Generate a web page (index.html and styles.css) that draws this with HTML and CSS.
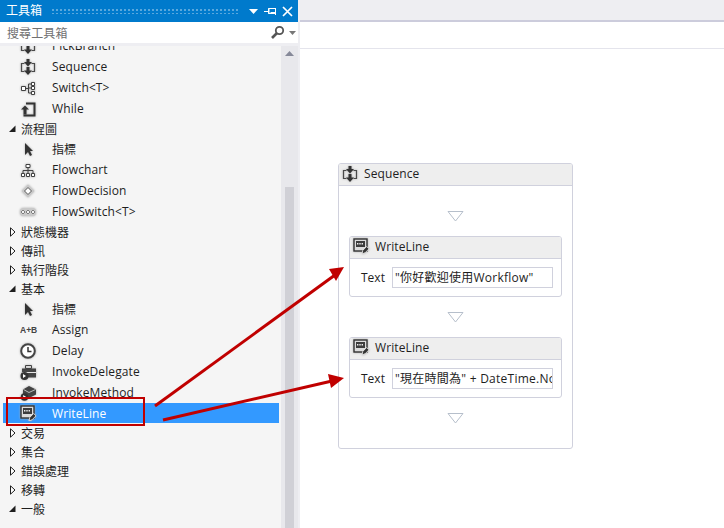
FILE: index.html
```html
<!DOCTYPE html>
<html lang="zh-Hant">
<head>
<meta charset="utf-8">
<title>工具箱</title>
<link rel="stylesheet" href="styles.css">
</head>
<body>
<svg class="defs" width="0" height="0" aria-hidden="true">
  <symbol id="a-closed" viewBox="0 0 7 10"><path d="M1.500 .8v8.400L6 5z" fill="#fff" stroke="#1e1e1e"/></symbol>
  <symbol id="a-open" viewBox="0 0 7 10"><path d="M0 8h6.500V1.500z" fill="#1e1e1e"/></symbol>
  <symbol id="i-seq" viewBox="0 0 16 16">
    <path d="M4.500 4.500h-3v8h3M11.500 4.500h3v8h-3" fill="none" stroke="#4a4a4a" stroke-width="1.200"/>
    <path d="M6.500 0h3v3H12L8 7.500 4 3h2.500zM6.500 8h3v3.500H12L8 16 4 11.500h2.500z" fill="#333"/>
  </symbol>
  <symbol id="i-switch" viewBox="0 0 16 16">
    <path d="M1.500 6.500h4v4h-4zM11.500 2.500h3v3h-3zM11.500 6.500h3v3h-3zM11.500 11.500h3v3h-3z" fill="#fff" stroke="#424242"/>
    <path d="M5.500 8.500h3M8.500 4v9M8.500 4h3M8.500 8h3M8.500 13h3" fill="none" stroke="#424242"/>
  </symbol>
  <symbol id="i-while" viewBox="0 0 16 16">
    <path d="M6 2.500h8.500v12H3.500" fill="none" stroke="#333" stroke-width="2"/>
    <path d="M1 8.500 5 4.500l4 4H6.500v5h-3v-5z" fill="#333"/>
  </symbol>
  <symbol id="i-cursor" viewBox="0 0 16 16">
    <path d="M5 2v12l3-3 2 4 2-1-2-4h3z" fill="#333"/>
  </symbol>
  <symbol id="i-flow" viewBox="0 0 16 16">
    <path d="M6 2.500h4v3H6zM1.500 11.500h3v3h-3zM6.500 11.500h3v3h-3zM11.500 11.500h3v3h-3z" fill="#fff" stroke="#424242"/>
    <path d="M8 5.500v6M3 11V8.500h10V11" fill="none" stroke="#424242"/>
  </symbol>
  <symbol id="i-decision" viewBox="0 0 16 16">
    <path d="M8 1.500 14.500 8 8 14.500 1.500 8z" fill="#c9c9c9"/>
    <path d="M8 4.500 11.500 8 8 11.500 4.500 8z" fill="#fff" stroke="#555"/>
  </symbol>
  <symbol id="i-fswitch" viewBox="0 0 16 16">
    <rect x="0" y="4" width="16" height="8" rx="3.500" fill="#c9c9c9"/>
    <path d="M3 6 5 8 3 10 1 8zM8 6 10 8 8 10 6 8zM13 6 15 8 13 10 11 8z" fill="#f2f2f2" stroke="#666" stroke-width=".8"/>
  </symbol>
  <symbol id="i-clock" viewBox="0 0 16 16">
    <circle cx="8" cy="8" r="6.800" fill="#fff" stroke="#444" stroke-width="2"/>
    <path d="M8 4v4.500h3.500" fill="none" stroke="#333" stroke-width="1.500"/>
  </symbol>
  <symbol id="i-delegate" viewBox="0 0 16 16">
    <path d="M5.500 1.500h6v3h-6z" fill="none" stroke="#444"/>
    <path d="M2 4.500h14v9H2z" fill="#444"/>
    <path d="M2 8.500h14" stroke="#e6e6e6"/>
    <circle cx="4.500" cy="12" r="4" fill="#333"/>
    <path d="M3 10v4l3-2z" fill="#fff"/>
  </symbol>
  <symbol id="i-method" viewBox="0 0 16 16">
    <path d="M9 1 16 4.500v5L9 13 3 9.500v-5z" fill="#444"/>
    <path d="M3.500 4.500 9 7.500l6.500-3" fill="none" stroke="#bbb"/>
    <circle cx="4.500" cy="12" r="3.800" fill="#333"/>
    <path d="M3.200 10v4l3-2z" fill="#fff"/>
  </symbol>
  <symbol id="i-write" viewBox="0 0 16 16">
    <rect x="1" y="1" width="13" height="12" fill="#dcdcdc" stroke="#333" stroke-width="1.400"/>
    <rect x="3" y="3" width="9" height="6" fill="#3c3c3c"/>
    <path d="M4 5h1.400v1.600H4zM6.300 5h1.400v1.600H6.300zM8.600 5h1.400v1.600H8.600z" fill="#f0f0f0"/>
    <path d="M9 16l.8-3.600 3.800-3.900 2.400 2.300-3.800 3.900z" fill="#333" stroke="#f2f2f2" stroke-width=".8"/>
  </symbol>
</svg>

<div class="app">
  <aside class="panel">
    <header class="titlebar">
      <span class="title">工具箱</span>
      <span class="grip"></span>
      <svg class="tb-icon" width="11" height="11" viewBox="0 0 11 11"><path d="M1 3h9L5.500 8z" fill="#fff"/></svg>
      <svg class="tb-icon" width="13" height="11" viewBox="0 0 13 11"><path d="M0 5.500h4M4.500 2.500h7v5h-7zM6.500 6.500h5M11.500 2v7" fill="none" stroke="#fff" stroke-width="1"/><path d="M5 2v6" stroke="#fff"/></svg>
      <svg class="tb-icon" width="11" height="11" viewBox="0 0 11 11"><path d="M1 1l9 9M10 1l-9 9" stroke="#fff" stroke-width="1.700"/></svg>
    </header>
    <div class="search">
      <span class="search-text">搜尋工具箱</span>
      <svg width="15" height="15" viewBox="0 0 15 15"><circle cx="9.500" cy="5.500" r="3.700" fill="none" stroke="#555" stroke-width="1.800"/><path d="M7 8 2 13" stroke="#555" stroke-width="2.600"/></svg>
      <svg class="search-caret" width="7" height="4" viewBox="0 0 7 4"><path d="M0 0h7L3.500 4z" fill="#777"/></svg>
    </div>
    <div class="body">
      <div class="list">
        <div class="list-inner">
          <div class="item"><svg class="ico"><use href="#i-seq"/></svg><span>PickBranch</span></div>
          <div class="item"><svg class="ico"><use href="#i-seq"/></svg><span>Sequence</span></div>
          <div class="item"><svg class="ico"><use href="#i-switch"/></svg><span>Switch&lt;T&gt;</span></div>
          <div class="item"><svg class="ico"><use href="#i-while"/></svg><span>While</span></div>
          <div class="cat"><svg class="arrow"><use href="#a-open"/></svg><span>流程圖</span></div>
          <div class="item"><svg class="ico"><use href="#i-cursor"/></svg><span>指標</span></div>
          <div class="item"><svg class="ico"><use href="#i-flow"/></svg><span>Flowchart</span></div>
          <div class="item"><svg class="ico"><use href="#i-decision"/></svg><span>FlowDecision</span></div>
          <div class="item"><svg class="ico"><use href="#i-fswitch"/></svg><span>FlowSwitch&lt;T&gt;</span></div>
          <div class="cat"><svg class="arrow"><use href="#a-closed"/></svg><span>狀態機器</span></div>
          <div class="cat"><svg class="arrow"><use href="#a-closed"/></svg><span>傳訊</span></div>
          <div class="cat"><svg class="arrow"><use href="#a-closed"/></svg><span>執行階段</span></div>
          <div class="cat"><svg class="arrow"><use href="#a-open"/></svg><span>基本</span></div>
          <div class="item"><svg class="ico"><use href="#i-cursor"/></svg><span>指標</span></div>
          <div class="item"><span class="ab">A+B</span><span>Assign</span></div>
          <div class="item"><svg class="ico"><use href="#i-clock"/></svg><span>Delay</span></div>
          <div class="item"><svg class="ico"><use href="#i-delegate"/></svg><span>InvokeDelegate</span></div>
          <div class="item"><svg class="ico"><use href="#i-method"/></svg><span>InvokeMethod</span></div>
          <div class="item selected"><svg class="ico"><use href="#i-write"/></svg><span>WriteLine</span></div>
          <div class="cat"><svg class="arrow"><use href="#a-closed"/></svg><span>交易</span></div>
          <div class="cat"><svg class="arrow"><use href="#a-closed"/></svg><span>集合</span></div>
          <div class="cat"><svg class="arrow"><use href="#a-closed"/></svg><span>錯誤處理</span></div>
          <div class="cat"><svg class="arrow"><use href="#a-closed"/></svg><span>移轉</span></div>
          <div class="cat"><svg class="arrow"><use href="#a-open"/></svg><span>一般</span></div>
        </div>
      </div>
      <div class="scrollbar">
        <svg class="scroll-up" width="9" height="5" viewBox="0 0 9 5"><path d="M0 5h9L4.500 0z" fill="#868999"/></svg>
        <div class="thumb"></div>
      </div>
    </div>
  </aside>

  <main class="designer">
    <div class="strip"></div>
    <div class="toolbar"></div>
    <div class="canvas">
      <section class="sequence">
        <header class="act-head"><svg class="act-ico"><use href="#i-seq"/></svg><span>Sequence</span></header>
        <div class="seq-body">
          <svg class="drop" width="17" height="11" viewBox="0 0 17 11"><path d="M1 .5h15L8.500 10z" fill="#fff" stroke="#b6bfcb"/></svg>
          <article class="activity">
            <header class="act-head"><svg class="act-ico"><use href="#i-write"/></svg><span>WriteLine</span></header>
            <div class="act-row"><label>Text</label><div class="field">"你好歡迎使用Workflow"</div></div>
          </article>
          <svg class="drop" width="17" height="11" viewBox="0 0 17 11"><path d="M1 .5h15L8.500 10z" fill="#fff" stroke="#b6bfcb"/></svg>
          <article class="activity">
            <header class="act-head"><svg class="act-ico"><use href="#i-write"/></svg><span>WriteLine</span></header>
            <div class="act-row"><label>Text</label><div class="field">"現在時間為" + DateTime.Now</div></div>
          </article>
          <svg class="drop" width="17" height="11" viewBox="0 0 17 11"><path d="M1 .5h15L8.500 10z" fill="#fff" stroke="#b6bfcb"/></svg>
        </div>
      </section>
    </div>
  </main>

  <div class="callout"></div>
  <svg class="arrows" width="724" height="528" viewBox="0 0 724 528">
    <path d="M155 406 335 275" stroke="#c00000" stroke-width="3" fill="none"/>
    <path d="M344 267 329 269 336 281z" fill="#c00000"/>
    <path d="M163 420 332 381" stroke="#c00000" stroke-width="3" fill="none"/>
    <path d="M344 378 328 374 331 388z" fill="#c00000"/>
  </svg>
</div>
</body>
</html>
```
FILE: styles.css
```css
* { box-sizing: border-box; }
html, body { margin: 0; height: 100%; }
body {
  font-family: "Open Sans", "Noto Sans CJK TC", sans-serif;
  font-size: 12px;
  color: #1e1e1e;
  background: #eeeef2;
  overflow: hidden;
}
.defs { position: absolute; }
.app { position: relative; display: flex; width: 724px; height: 528px; overflow: hidden; }

.panel { width: 298px; display: flex; flex-direction: column; flex: none; }
.titlebar {
  height: 22px; background: #007acc; color: #fff;
  display: flex; align-items: center; padding: 0 5px 0 6px; gap: 4px;
}
.title { font-size: 12px; line-height: 22px; }
.grip {
  flex: 1; height: 5px; margin: 0 5px 0 6px;
  background-image: radial-gradient(circle at 1px 1px, #59a8de 0.8px, transparent 1px);
  background-size: 4px 4px;
}
.tb-icon { flex: none; margin-left: 1px; }
.search {
  height: 21px; background: #fff; color: #717171;
  display: flex; align-items: center; padding: 0 2px 0 7px;
}
.search-text { flex: 1; letter-spacing: 0.1px; }
.search-caret { margin-left: 4px; }

.body { flex: 1; min-height: 0; display: flex; background: #eeeef2; padding-top: 3px; }
.list { flex: 1; background: #f5f5f5; overflow: hidden; padding-left: 3px; padding-right: 2px; }
.list-inner { margin-top: -11px; }
.item { height: 21px; display: flex; align-items: center; padding-left: 17px; color: #1e1e1e; letter-spacing: 0.1px; }
.item span:last-child { margin-left: 16px; }
.item.selected { background: #3399ff; color: #fff; height: 20px; }
.ico { width: 16px; height: 16px; flex: none; filter: drop-shadow(0 0 1px #aaa); }
.ab { width: 16px; flex: none; font-family: "Liberation Sans", sans-serif; font-size: 8.500px; font-weight: bold; color: #444; white-space: nowrap; letter-spacing: 0; }
.cat { height: 19px; display: flex; align-items: center; padding-left: 6px; }
.cat span { margin-left: 5px; }
.arrow { width: 7px; height: 10px; flex: none; }

.scrollbar { width: 17px; flex: none; background: #e8e8ec; padding: 0 4px 0 4px; display: flex; flex-direction: column; align-items: center; }
.scroll-up { margin-top: 5px; }
.thumb { width: 9px; margin-top: 131px; flex: 1; background: #d0d0d6; }

.designer { flex: 1; margin-left: 2px; display: flex; flex-direction: column; min-width: 0; }
.strip { height: 20px; background: #eeeef2; border-bottom: 2px solid #ccccdc; box-sizing: content-box; }
.toolbar { height: 26px; background: #fff; border-bottom: 1px solid #e4e4ec; box-sizing: content-box; }
.canvas { flex: 1; background: #fff; padding: 114px 0 0 38px; }

.sequence { width: 235px; height: 286px; border: 1px solid #d0d1dd; border-radius: 3px; background: #fff; overflow: hidden; }
.act-head {
  height: 22px; background: #eeeeee; border-bottom: 1px solid #d0d1dd;
  display: flex; align-items: center; padding: 0 0 2px 3px; color: #1e1e1e; letter-spacing: 0.1px;
}
.activity .act-head { padding-bottom: 3px; }
.act-ico { width: 16px; height: 16px; flex: none; margin-right: 6px; filter: drop-shadow(0 0 1px #aaa); }
.seq-body { display: flex; flex-direction: column; align-items: center; padding-top: 25px; }
.activity { width: 213px; height: 61px; border: 1px solid #d0d1dd; border-radius: 3px; margin: 14px 0 15px; background: #fff; overflow: hidden; }
.act-row { display: flex; align-items: center; padding: 8px 8px 0 11px; }
.act-row label { width: 31px; color: #1e1e1e; }
.field { width: 161px; height: 21px; border: 1px solid #d0d1dd; padding-left: 2px; line-height: 19px; white-space: nowrap; overflow: hidden; letter-spacing: 0.25px; }

.callout { position: absolute; left: 6px; top: 397px; width: 139px; height: 29px; border: 2px solid #c00000; }
.arrows { position: absolute; left: 0; top: 0; pointer-events: none; }
```
